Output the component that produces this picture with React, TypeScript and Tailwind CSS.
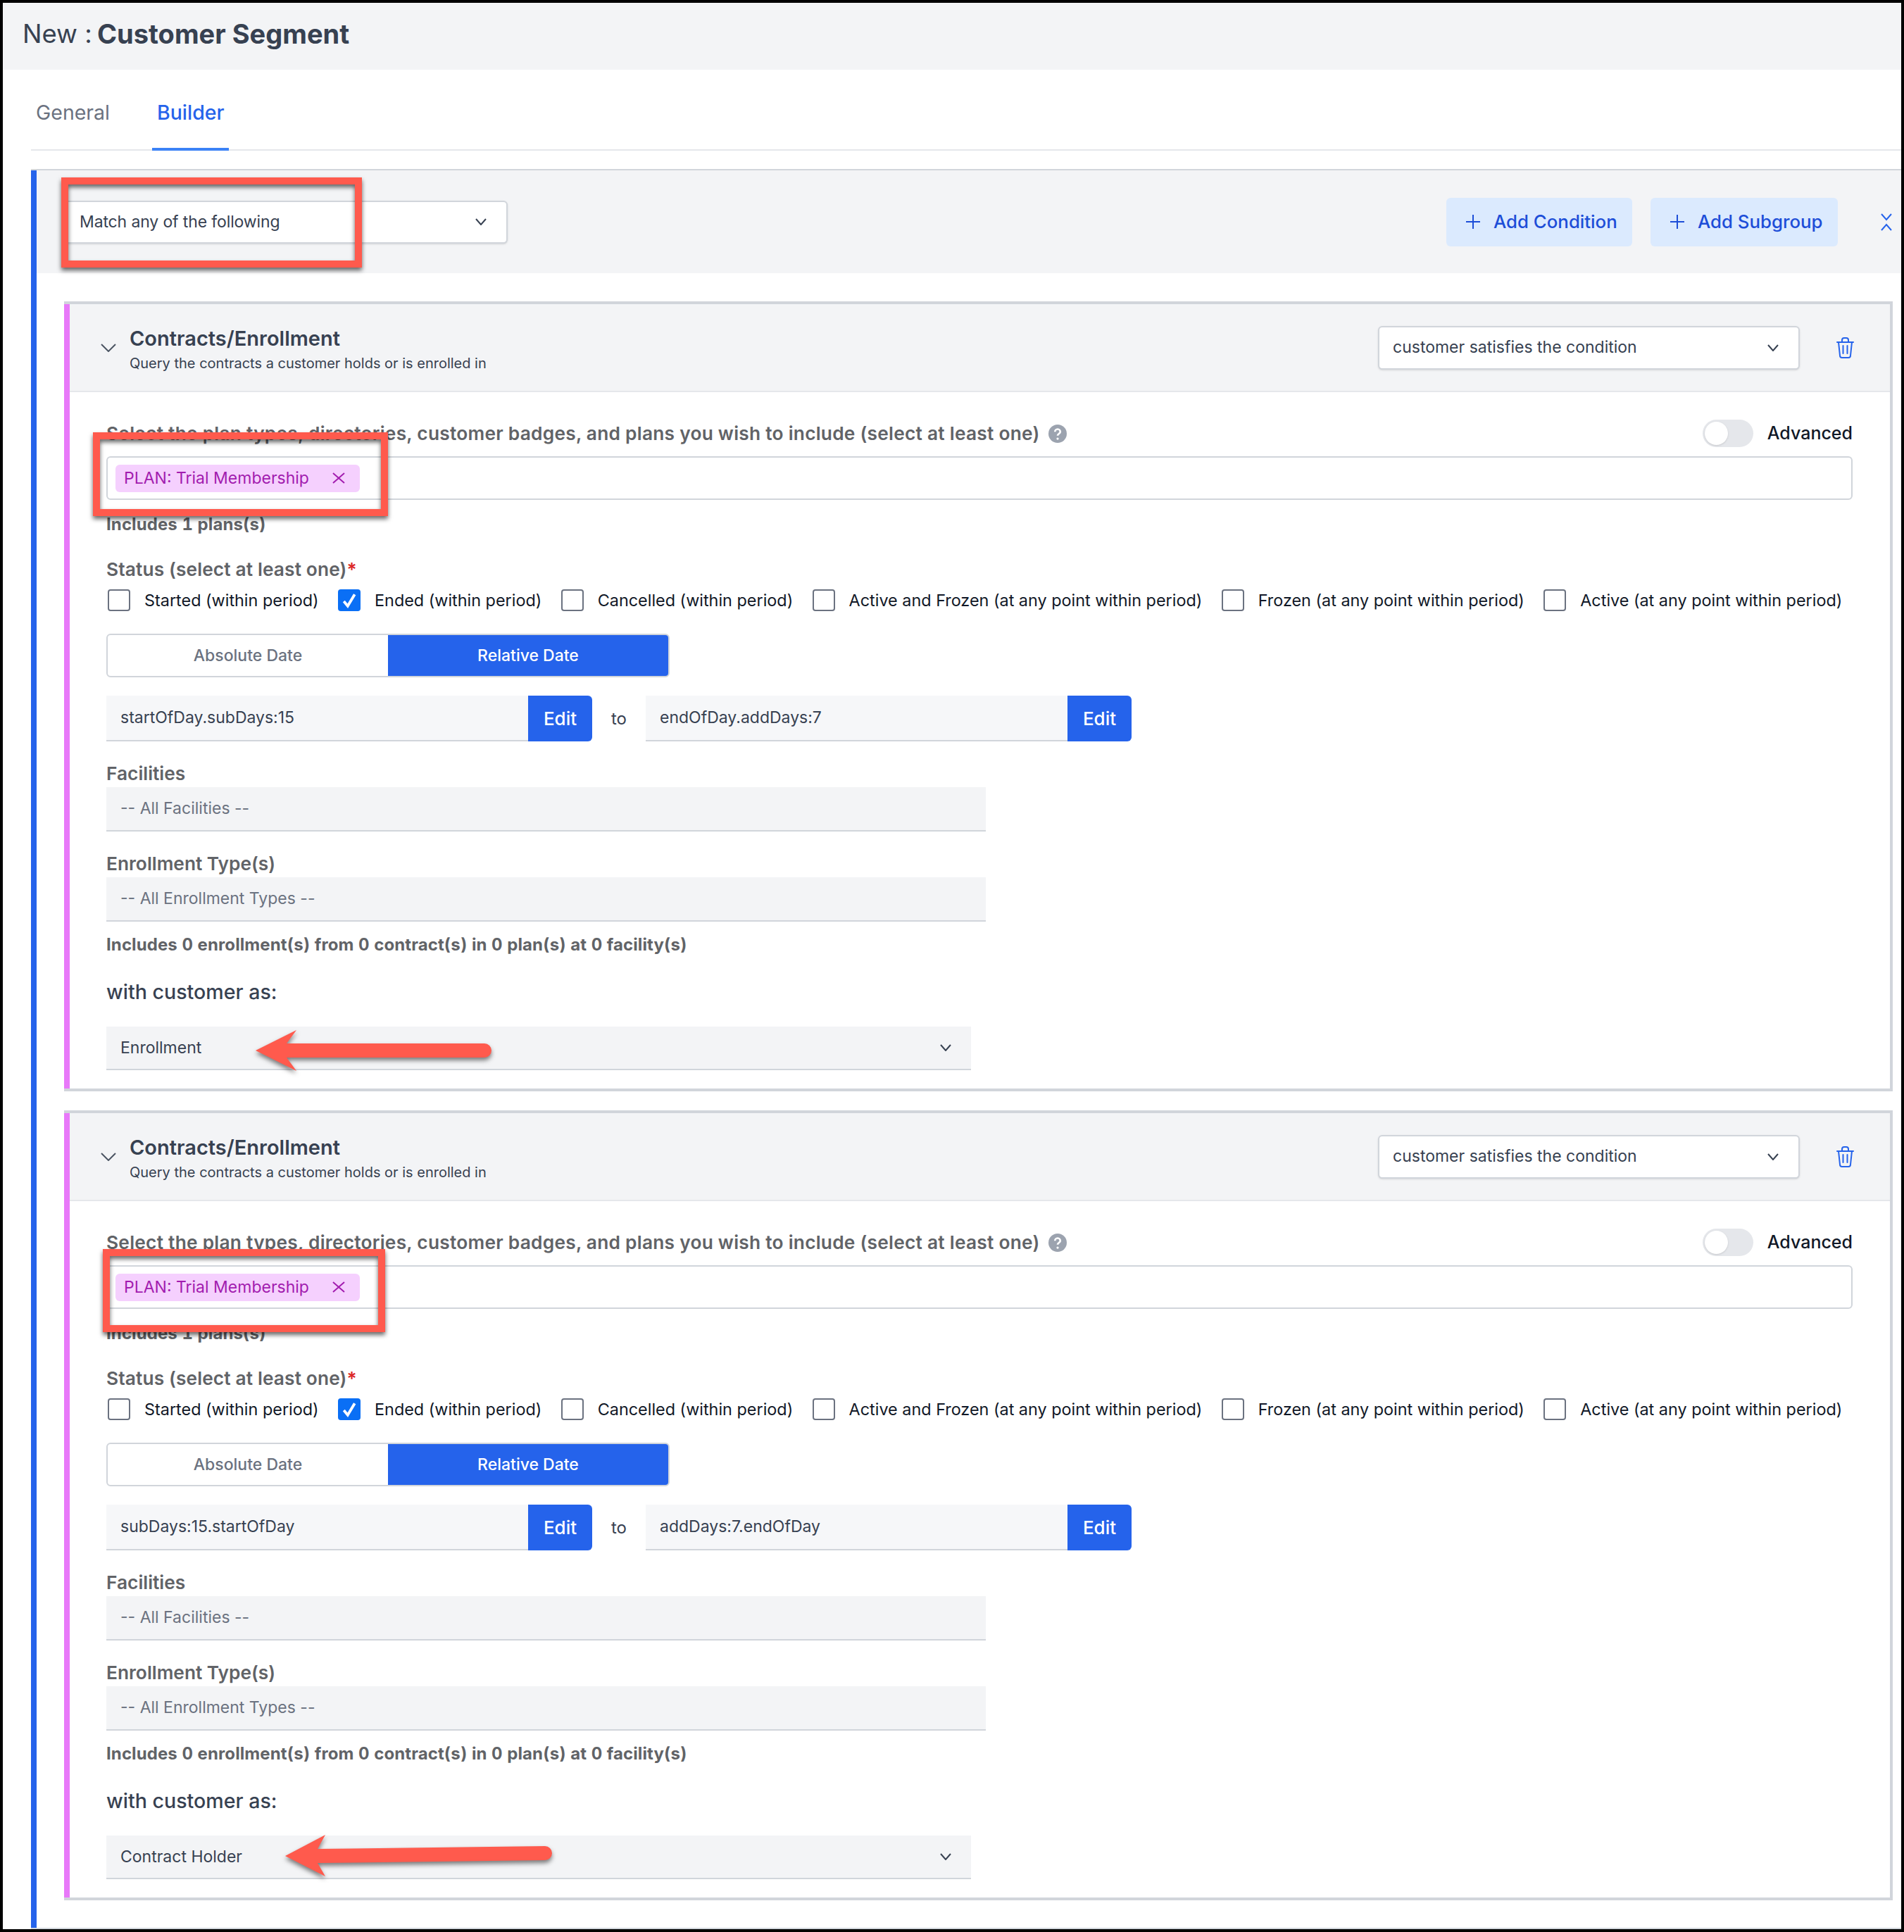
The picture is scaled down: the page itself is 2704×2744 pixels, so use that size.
import { ReactNode } from 'react'

const font = { fontFamily: 'Inter, sans-serif' }

function Chevron({ className = 'w-[16px] h-[10px]' }: { className?: string }) {
  return (
    <svg viewBox="0 0 16 10" className={className} fill="none" stroke="currentColor" strokeWidth="2">
      <path d="M1 1l7 8 7-8" />
    </svg>
  )
}

function Trash() {
  return (
    <svg viewBox="0 0 25 30" className="w-[25px] h-[30px] text-[#2563eb]" fill="none" stroke="currentColor" strokeWidth="2" strokeLinecap="round" strokeLinejoin="round">
      <path d="M1 7h23M8 7V4a3 3 0 013-3h3a3 3 0 013 3v3M3 7l2 19a3 3 0 003 3h9a3 3 0 003-3l2-19M9.500 12v11M15.500 12v11" />
    </svg>
  )
}

function WhiteSelect({ label, className }: { label: string; className: string }) {
  return (
    <div className={`flex items-center justify-between bg-white border-2 border-[#d1d5db] rounded-[6px] shadow-sm text-[#374151] text-[23px] ${className}`}>
      <span>{label}</span>
      <Chevron className="w-[16px] h-[10px] text-[#374151]" />
    </div>
  )
}

function GraySelect({ label, className, muted, chevron }: { label: string; className: string; muted?: boolean; chevron?: boolean }) {
  return (
    <div className={`flex items-center justify-between bg-[#f3f4f6] border-b-2 border-[#d1d5db] pl-[20px] text-[23px] ${muted ? 'text-[#6b7280]' : 'text-[#374151]'} ${className}`}>
      <span>{label}</span>
      {chevron && <Chevron className="w-[16px] h-[10px] text-[#374151] mr-[28px]" />}
    </div>
  )
}

function Label({ children, className = '' }: { children: ReactNode; className?: string }) {
  return <div className={`text-[26.3px] leading-[30px] font-semibold text-[#616367] ${className}`}>{children}</div>
}

function Note({ children, className = '' }: { children: ReactNode; className?: string }) {
  return <div className={`text-[24px] leading-[30px] font-bold tabular-nums tracking-[0.1px] text-[#616367] ${className}`}>{children}</div>
}

function Check({ label, checked }: { label: string; checked?: boolean }) {
  return (
    <div className="flex items-center">
      {checked ? (
        <div className="w-[32px] h-[31px] rounded-[4px] bg-[#0a6ff5] flex items-center justify-center">
          <svg viewBox="0 0 20 20" className="w-[22px] h-[22px]" fill="none" stroke="white" strokeWidth="3.500">
            <path d="M3 11l5 6 9-15" />
          </svg>
        </div>
      ) : (
        <div className="w-[32px] h-[31px] rounded-[4px] border-2 border-[#6b7280] bg-white" />
      )}
      <span className="ml-[20px] text-[23.4px] text-[#111827] whitespace-nowrap">{label}</span>
    </div>
  )
}

function DateField({ value }: { value: string }) {
  return (
    <div className="flex h-[65px]">
      <div className="w-[599px] bg-[#f6f7f9] border-b-2 border-[#d1d5db] pl-[20px] flex items-center text-[23px] text-[#374151]">{value}</div>
      <div className="w-[91px] bg-[#2563eb] rounded-r-[6px] flex items-center justify-center text-[26px] font-medium text-white">Edit</div>
    </div>
  )
}

function ConditionCard({ start, end, as }: { start: string; end: string; as: string }) {
  return (
    <div className="border-y-4 border-r-4 border-[#d1d5db]">
      <div className="border-l-8 border-[#e879f9]">
        <div className="h-[125px] bg-[#f3f4f6] border-b-2 border-[#e5e7eb] flex items-center pl-[44px] pr-[51px]">
          <svg viewBox="0 0 22 12" className="w-[22px] h-[12px] text-[#4b5563]" fill="none" stroke="currentColor" strokeWidth="2">
            <path d="M1 1l10 10 10-10" />
          </svg>
          <div className="ml-[19px] pt-[5px] flex-1">
            <div className="text-[29px] leading-[38px] font-semibold text-[#374151]">Contracts/Enrollment</div>
            <div className="mt-[2px] text-[20px] leading-[28px] text-[#374151]">Query the contracts a customer holds or is enrolled in</div>
          </div>
          <WhiteSelect label="customer satisfies the condition" className="w-[599px] h-[62px] pl-[19px] pr-[28px]" />
          <div className="ml-[52px]"><Trash /></div>
        </div>
        <div className="pl-[52px] pr-[53px] pt-[39px] pb-[26px]">
          <div className="flex items-center justify-between h-[39px]">
            <div className="flex items-center">
              <Label className="whitespace-nowrap tracking-[0.25px]">Select the plan types, directories, customer badges, and plans you wish to include (select at least one)</Label>
              <svg viewBox="0 0 24 24" className="ml-[12px] w-[26px] h-[26px]">
                <circle cx="12" cy="12" r="12" fill="#9ca3af" />
                <path d="M8.500 9.500a3.500 3.500 0 117 0c0 2.500-3.500 2.500-3.500 5" fill="none" stroke="white" strokeWidth="2.500" />
                <circle cx="12" cy="18.500" r="1.500" fill="white" />
              </svg>
            </div>
            <div className="flex items-center">
              <div className="w-[72px] h-[39px] rounded-full bg-[#e5e7eb] flex items-center pl-[3px]">
                <div className="w-[33px] h-[33px] rounded-full bg-white shadow" />
              </div>
              <span className="ml-[20px] text-[25px] font-medium text-[#111827]">Advanced</span>
            </div>
          </div>
          <div className="mt-[13px] h-[62px] border-2 border-[#d1d5db] rounded-[6px] flex items-center pl-[11px]">
            <div className="h-[39px] w-[347px] bg-[#f5d0fe] rounded-[6px] flex items-center justify-between pl-[12px] pr-[21px] text-[23px] text-[#a21caf]">
              <span>PLAN: Trial Membership</span>
              <svg viewBox="0 0 18 16" className="w-[18px] h-[16px]" fill="none" stroke="currentColor" strokeWidth="2">
                <path d="M1 1l16 14M17 1L1 15" />
              </svg>
            </div>
          </div>
          <Note className="mt-[20px]">Includes 1 plans(s)</Note>
          <Label className="mt-[34px] tracking-[0.13px]">Status (select at least one)<span className="text-[#dc2626]">*</span></Label>
          <div className="mt-[13px] h-[31px] flex items-center pl-[2px] gap-[27.400px]">
            <Check label="Started (within period)" />
            <Check label="Ended (within period)" checked />
            <Check label="Cancelled (within period)" />
            <Check label="Active and Frozen (at any point within period)" />
            <Check label="Frozen (at any point within period)" />
            <Check label="Active (at any point within period)" />
          </div>
          <div className="mt-[32px] h-[62px] w-[800px] border-2 border-[#d1d5db] rounded-[6px] flex overflow-hidden text-[23px] font-medium">
            <div className="w-[398px] flex items-center justify-center text-[#6b7280]">Absolute Date</div>
            <div className="flex-1 bg-[#2563eb] flex items-center justify-center text-white">Relative Date</div>
          </div>
          <div className="mt-[26px] flex items-center">
            <DateField value={start} />
            <div className="w-[76px] text-center text-[24px] text-[#374151]">to</div>
            <DateField value={end} />
          </div>
          <Label className="mt-[31px]">Facilities</Label>
          <GraySelect label="-- All Facilities --" muted className="mt-[4px] h-[63px] w-[1249px]" />
          <Label className="mt-[31px]">Enrollment Type(s)</Label>
          <GraySelect label="-- All Enrollment Types --" muted className="mt-[4px] h-[63px] w-[1249px]" />
          <Note className="mt-[18px]">Includes 0 enrollment(s) from 0 contract(s) in 0 plan(s) at 0 facility(s)</Note>
          <div className="mt-[36px] text-[28.6px] leading-[32px] font-medium text-[#374151]">with customer as:</div>
          <GraySelect label={as} chevron className="mt-[33px] h-[62px] w-[1228px]" />
        </div>
      </div>
    </div>
  )
}

function RedBox({ className }: { className: string }) {
  return <div className={`absolute border-[10px] border-[#ff5a4d] [filter:drop-shadow(0_4px_3px_rgba(0,0,0,0.6))] ${className}`} />
}

function AddButton({ label, className }: { label: string; className: string }) {
  return (
    <div className={`h-[69px] rounded-[6px] bg-[#dbeafe] text-[#1d4ed8] flex items-center pl-[28px] text-[25.8px] font-medium ${className}`}>
      <svg viewBox="0 0 20 20" className="w-[20px] h-[20px] mr-[19px]" fill="none" stroke="currentColor" strokeWidth="2">
        <path d="M10 0v20M0 10h20" />
      </svg>
      {label}
    </div>
  )
}

export default function App() {
  return (
    <div style={font} className="relative w-[2704px] h-[2744px] border-4 border-black bg-white overflow-hidden">
      <div className="h-[95px] bg-[#f3f4f6] flex items-center pl-[28px] pb-[7px] text-[#374151]">
        <span className="w-[106px] text-[36.500px] font-normal">New :</span>
        <span className="text-[38px] font-bold">Customer Segment</span>
      </div>
      <div className="ml-[40px] h-[115px] border-b-2 border-[#e5e7eb] flex text-[28.500px] leading-[26px]">
        <div className="pl-[7px] pt-[48px] w-[172px] text-[#6b7280]">General</div>
        <div className="px-[7px] pt-[48px] w-[109px] h-[115px] border-b-4 border-[#3b82f6] text-[#2563eb] font-medium">Builder</div>
      </div>
      <div className="mt-[26px] ml-[40px] border-y-2 border-[#d1d5db] h-[2500px]">
        <div className="border-l-8 border-[#2563eb] h-full">
          <div className="h-[146px] bg-[#f3f4f6] flex items-center pl-[39px] pr-[13px]">
            <WhiteSelect label="Match any of the following" className="w-[630px] h-[61px] pl-[20px] pr-[28px] tracking-[-0.13px]" />
            <AddButton label="Add Condition" className="ml-auto w-[264px]" />
            <AddButton label="Add Subgroup" className="ml-[26px] w-[266px]" />
            <svg viewBox="0 0 16 25" className="ml-[61px] w-[16px] h-[25px] text-[#2563eb]" fill="none" stroke="currentColor" strokeWidth="2">
              <path d="M1 1l7 8 7-8M1 24l7-8 7 8" />
            </svg>
          </div>
          <div className="pl-[39px] pr-[12px] pt-[40px] flex flex-col gap-[27px]">
            <ConditionCard start="startOfDay.subDays:15" end="endOfDay.addDays:7" as="Enrollment" />
            <ConditionCard start="subDays:15.startOfDay" end="addDays:7.endOfDay" as="Contract Holder" />
          </div>
        </div>
      </div>

      {/* annotations, page coordinates minus the 4px frame */}
      <RedBox className="left-[83px] top-[248px] w-[427px] h-[128px]" />
      <RedBox className="left-[128px] top-[610px] w-[419px] h-[119px]" />
      <RedBox className="left-[142px] top-[1770px] w-[401px] h-[118px]" />
      <svg viewBox="0 0 345 70" className="absolute left-[355px] top-[1455px] w-[345px] h-[70px] [filter:drop-shadow(0_4px_3px_rgba(0,0,0,0.5))]">
        <path d="M4 33L62 4L48 23H329a10 10 0 010 20H48L62 62Z" fill="#ff5a4d" />
      </svg>
      <svg viewBox="0 0 390 70" className="absolute left-[397px] top-[2598px] w-[390px] h-[70px] [filter:drop-shadow(0_4px_3px_rgba(0,0,0,0.5))]">
        <path d="M4 34L61 4L50 24L373 20a10 10 0 010 20L50 44L61 63Z" fill="#ff5a4d" />
      </svg>
    </div>
  )
}
